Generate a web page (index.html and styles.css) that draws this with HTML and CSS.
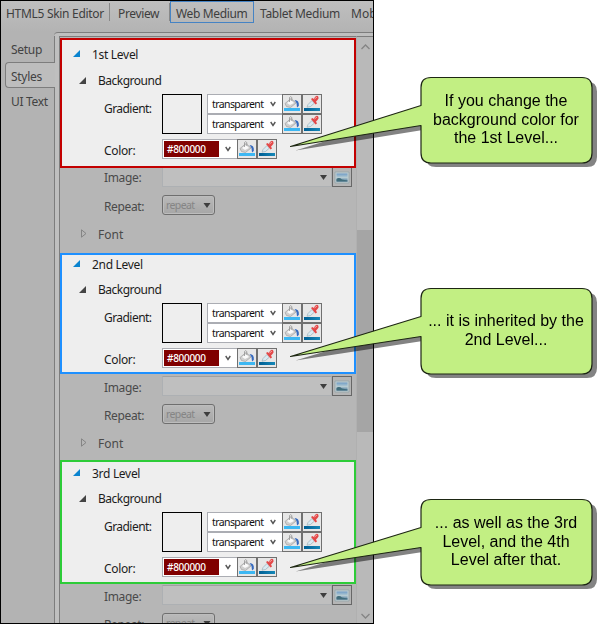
FILE: index.html
```
<!DOCTYPE html>
<html lang="en">
<head>
<meta charset="utf-8">
<title>HTML5 Skin Editor</title>
<link rel="stylesheet" href="styles.css">
</head>
<body>
<svg class="defs" width="0" height="0" aria-hidden="true">
  <defs>
    <linearGradient id="blue" x1="0" x2="1"><stop offset="0" stop-color="#005f94"/><stop offset="1" stop-color="#1688b8"/></linearGradient>
    <linearGradient id="sky" x1="0" y1="0" x2="0" y2="1"><stop offset="0" stop-color="#6f9cc6"/><stop offset=".5" stop-color="#b5cbd2"/><stop offset="1" stop-color="#49749a"/></linearGradient>
    <symbol id="bucket" viewBox="0 0 18 18">
      <path d="M2 8.500 8 3.500 13 8 7.500 12.500 3.500 11.500Z" fill="#cfcfcf" stroke="#a0a0a0" stroke-width=".7"/>
      <path d="M4 8 8 5 11 8 7 10Z" fill="#fafafa"/>
      <path d="M6.500 7V2.500Q7.500 .8 8.800 2.500V6" fill="none" stroke="#949494" stroke-width=".8"/>
      <path d="M11.500 5Q16.500 5 15.800 11L14 12.500 13.500 8Z" fill="#3569bd"/>
      <path d="M1 13h16v3H1z" fill="#3db7f2"/>
    </symbol>
    <symbol id="dropper" viewBox="0 0 18 18">
      <path d="M4 12.200 5 9.500 9 5.500 11.500 8 7.500 11.500Z" fill="#d9eaf2" stroke="#9bafb8" stroke-width=".7"/>
      <path d="M8 4 9.500 3 10.800 4 12 2Q14 0 15.200 1.500T14.500 5L13 6.500 14 8.500 12.500 9.500Z" fill="#e34848"/>
      <path d="M11.500 4 14 2" stroke="#f6a1a1"/>
      <path d="M1 13h16v3H1z" fill="url(#blue)"/>
    </symbol>
    <symbol id="picture" viewBox="0 0 18 18">
      <path d="M2 4h14v11H2z" fill="#c0cccf" stroke="#8ea0a7" stroke-width=".7"/>
      <path d="M3.500 5.500h11v8h-11z" fill="url(#sky)"/>
      <path d="M3.500 11Q6 9 9 11.500l5.500 1v1h-11z" fill="#416d7b"/>
    </symbol>
    <symbol id="chev" viewBox="0 0 6 6"><path d="M.7 1 3 4.500 5.300 1" fill="none" stroke="#555" stroke-width="1.400"/></symbol>
    <symbol id="open" viewBox="0 0 7 7"><path d="M7 0v7H0z" fill="currentColor"/></symbol>
    <symbol id="closed" viewBox="0 0 6 9"><path d="M.5.8v7.400L5 4.500z" fill="none" stroke="#858585"/></symbol>
    <symbol id="down" viewBox="0 0 7 5"><path d="M0 0h7L3.500 5z" fill="#3e3e3e"/></symbol>
  </defs>
</svg>
<div class="stage">
  <main class="window">
    <nav class="topbar">
      <span class="tab t-editor">HTML5 Skin Editor</span>
      <span class="tab t-preview">Preview</span>
      <span class="tab t-web">Web Medium</span>
      <span class="tab t-tablet">Tablet Medium</span>
      <span class="tab t-mobile">Mob</span>
    </nav>
    <div class="body">
      <aside class="side">
        <span class="side-tab">Setup</span>
        <span class="side-tab selected">Styles</span>
        <span class="side-tab">UI Text</span>
      </aside>
      <div class="panel">
        <div class="tree" id="tree"></div>
        <div class="scroll">
          <svg width="9" height="6"><path d="M.5 5 4.500 1 8.500 5" fill="none" stroke="#858585" stroke-width="1.300"/></svg>
          <div class="thumb"></div>
          <svg width="9" height="6"><path d="M.5 1 4.500 5 8.500 1" fill="none" stroke="#858585" stroke-width="1.300"/></svg>
        </div>
      </div>
    </div>
  </main>
  <svg class="balloons" width="607" height="624">
    <defs>
      <path id="b" d="M290.500 68.500 421 28.500V10.500Q421 .5 431 .5H582Q592 .5 592 10.500V76Q592 86 582 86H431Q421 86 421 76V48.500Z"/>
      <path id="a" d="M290.500 69.500 421 28.500V10.500Q421 .5 431 .5H582Q592 .5 592 10.500V76Q592 86 582 86H431Q421 86 421 76V48.500Z"/>
    </defs>
    <g class="shadow"><use href="#a" x="5" y="81"/><use href="#b" x="5" y="292"/><use href="#b" x="5" y="503"/></g>
    <g class="bubble"><use href="#a" y="77"/><use href="#b" y="288"/><use href="#b" y="499"/></g>
  </svg>
  <div class="note n1">If you change the<br>background color for<br>the 1st Level...</div>
  <div class="note n2">... it is inherited by the<br>2nd Level...</div>
  <div class="note n3">... as well as the 3rd<br>Level, and the 4th<br>Level after that.</div>
</div>
<script src="script.js"></script>
</body>
</html>
```
FILE: styles.css
```
* { box-sizing: border-box; }
body { margin: 0; background: #fff; font: 12px/16px "Noto Sans", "Open Sans", sans-serif; color: #1c1c1c; }
.defs { position: absolute; }
svg { display: block; flex: none; }
.stage { position: relative; width: 607px; height: 624px; overflow: hidden; }
.window { width: 374px; height: 624px; border: 1px solid #000; background: #b3b3b3; overflow: hidden; display: flex; flex-direction: column; }
.topbar { height: 31px; flex: none; display: flex; align-items: flex-start; background: linear-gradient(#bfbfbf, #b3b3b3); color: #3e3e3e; white-space: nowrap; }
.tab { flex: none; height: 22px; line-height: 25px; }
.t-editor { width: 109px; padding-left: 5px; letter-spacing: -.3px; }
.t-preview { width: 60px; padding-left: 8px; letter-spacing: -.35px; }
.t-editor, .t-preview { background: linear-gradient(#888, #888) right 0 top 2px / 1px 18px no-repeat; }
.t-web { width: 84px; padding-left: 5px; line-height: 23px; border: 1px solid #4583c4; letter-spacing: -.35px; }
.t-tablet { width: 92px; padding-left: 6px; letter-spacing: -.3px; }
.t-mobile { padding-left: 5px; letter-spacing: 0; }
.body { flex: 1; min-height: 0; display: flex; }
.side { width: 54px; flex: none; padding-top: 4px; color: #424242; background: linear-gradient(#7d7d7d, #7d7d7d) right 0 top 4px / 1px 100% no-repeat; position: relative; z-index: 1; }
.side-tab { display: block; height: 26px; line-height: 28px; padding-left: 10px; letter-spacing: -.3px; }
.side-tab.selected { width: 50px; margin-left: 4px; padding-left: 5px; line-height: 27px; border: 1px solid #7d7d7d; border-right: 0; border-radius: 4px 0 0 4px; background: #bdbdbd; }
.panel { flex: 1; min-width: 0; display: flex; margin-left: -1px; padding: 3px 0 0 5px; border-top: 1px solid #7d7d7d; border-top-left-radius: 4px; background: #bfbfbf; }
.tree { width: 297px; flex: none; padding-top: 1px; background: #b6b6b6; border: solid #7d7d7d; border-width: 1px 0 0 1px; }
.scroll { flex: 1; padding: 7px 0 2px; display: flex; flex-direction: column; align-items: center; background: #b9b9b9; border-top: 1px solid #7d7d7d; border-left: 1px solid #b0b0b0; }
.thumb { width: 100%; height: 202px; margin: 180px 0 181px; flex: none; background: #a5a5a5; }
.mark { width: 296px; background: #eee; border: 2px solid; overflow: hidden; }
.mark.red { height: 130px; border-color: #c30000; }
.mark.blue { height: 121px; border-color: #1e90ff; }
.mark.green { height: 124px; border-color: #2dcc38; }
.title { display: flex; gap: 12px; padding-left: 11px; letter-spacing: -.3px; }
.title svg { margin-top: 10px; color: #0a84cf; }
.red .title { height: 28px; line-height: 29px; }
.blue .title { height: 22px; line-height: 19px; }
.blue .title svg { margin-top: 5px; }
.green .title { height: 24px; line-height: 23px; }
.green .title svg { margin-top: 7px; }
.sub { height: 26px; line-height: 26px; display: flex; gap: 12px; padding-left: 17px; letter-spacing: -.5px; }
.sub svg { margin-top: 9px; color: #444; }
.row { display: flex; padding-left: 42px; }
.label { width: 58px; flex: none; letter-spacing: -.55px; }
.gradient { height: 40px; margin-bottom: 5px; }
.gradient .label { line-height: 29px; }
.swatch { width: 40px; height: 40px; border: 1px solid #000; margin-right: 5px; flex: none; }
.picker { display: flex; height: 20px; }
.combo { width: 75px; height: 20px; display: flex; align-items: center; justify-content: space-between; padding: 0 6px 0 4px; background: #fff; border: 1px solid #abadb3; border-right: 0; font-size: 10.5px; line-height: 19px; color: #111; letter-spacing: -.6px; }
.color .combo { padding-left: 1px; }
.color .label { line-height: 23px; letter-spacing: -.35px; }
.value { width: 55px; height: 16px; padding-left: 3px; line-height: 16px; color: #fff; background: #800000; font-size: 10px; font-weight: 500; letter-spacing: -.3px; }
.btn { width: 20px; height: 20px; flex: none; border: 1px solid #707070; background: #e7e7e7; }
.rest { color: #4a4a4a; overflow: hidden; }
.rest .row { padding-left: 44px; }
.rest .label { line-height: 23px; letter-spacing: -.35px; }
.r1 { height: 85px; }
.r2 { height: 86px; padding-top: 2px; }
.r3 { height: 39px; padding-top: 1px; }
.image { height: 20px; }
.r1 .image { height: 19px; align-items: flex-end; }
.r1 .image .label { line-height: 19px; }
.field { width: 170px; height: 20px; padding: 0 4px 0 5px; display: flex; align-items: center; justify-content: flex-end; background: #bfbfbf; border: 1px solid #adb0b3; border-top-color: #a0a0a0; }
.r1 .field { border-top: 0; height: 19px; }
.image .btn { background: #b5b5b5; border-color: #676767; }
.repeat { margin-top: 8px; height: 20px; }
.drop { width: 53px; height: 20px; padding: 0 3px; display: flex; align-items: center; justify-content: space-between; border: 1px solid #6f6f6f; border-radius: 3px; background: linear-gradient(#bababa, #a6a6a6); box-shadow: inset 0 0 0 1px #bdbdbd; color: #858585; font-size: 10.5px; line-height: 16px; letter-spacing: -.6px; }
.font { display: flex; gap: 11px; padding-left: 21px; line-height: 39px; }
.font svg { margin-top: 14px; }
.balloons { position: absolute; left: 0; top: 0; }
.shadow { fill: #000; opacity: .49; }
.bubble { fill: #c2ef83; stroke: #1d2613; stroke-width: 1.200; stroke-linejoin: round; }
.note { position: absolute; left: 416px; width: 180px; font: 16px/18.500px "Liberation Sans", Arial, sans-serif; color: #000; text-align: center; white-space: nowrap; }
.n1 { top: 92px; }
.n2 { top: 312px; }
.n3 { top: 514px; }
```
FILE: script.js
```
const icon = (id, w, h) => `<svg width="${w}" height="${h}"><use href="#${id}"/></svg>`;
const buttons = `<span class="btn">${icon("bucket", 18, 18)}</span><span class="btn">${icon("dropper", 18, 18)}</span>`;
const picker = `<div class="picker"><span class="combo">transparent${icon("chev", 6, 6)}</span>${buttons}</div>`;
const levels = [["1st Level", "red"], ["2nd Level", "blue"], ["3rd Level", "green"]];
document.getElementById("tree").innerHTML = levels.map(([name, color], i) => `
  <section class="mark ${color}">
    <div class="title">${icon("open", 7, 7)}<span>${name}</span></div>
    <div class="sub">${icon("open", 7, 7)}<span>Background</span></div>
    <div class="row gradient"><span class="label">Gradient:</span><span class="swatch"></span><div>${picker}${picker}</div></div>
    <div class="row color"><span class="label">Color:</span><span class="combo"><span class="value">#800000</span>${icon("chev", 6, 6)}</span>${buttons}</div>
  </section>
  <section class="rest r${i + 1}">
    <div class="row image"><span class="label">Image:</span><span class="field">${icon("down", 7, 5)}</span><span class="btn">${icon("picture", 18, 18)}</span></div>
    <div class="row repeat"><span class="label">Repeat:</span><span class="drop">repeat${icon("down", 8, 5)}</span></div>
    ${i < 2 ? `<div class="font">${icon("closed", 6, 9)}<span>Font</span></div>` : ""}
  </section>`).join("");
```
